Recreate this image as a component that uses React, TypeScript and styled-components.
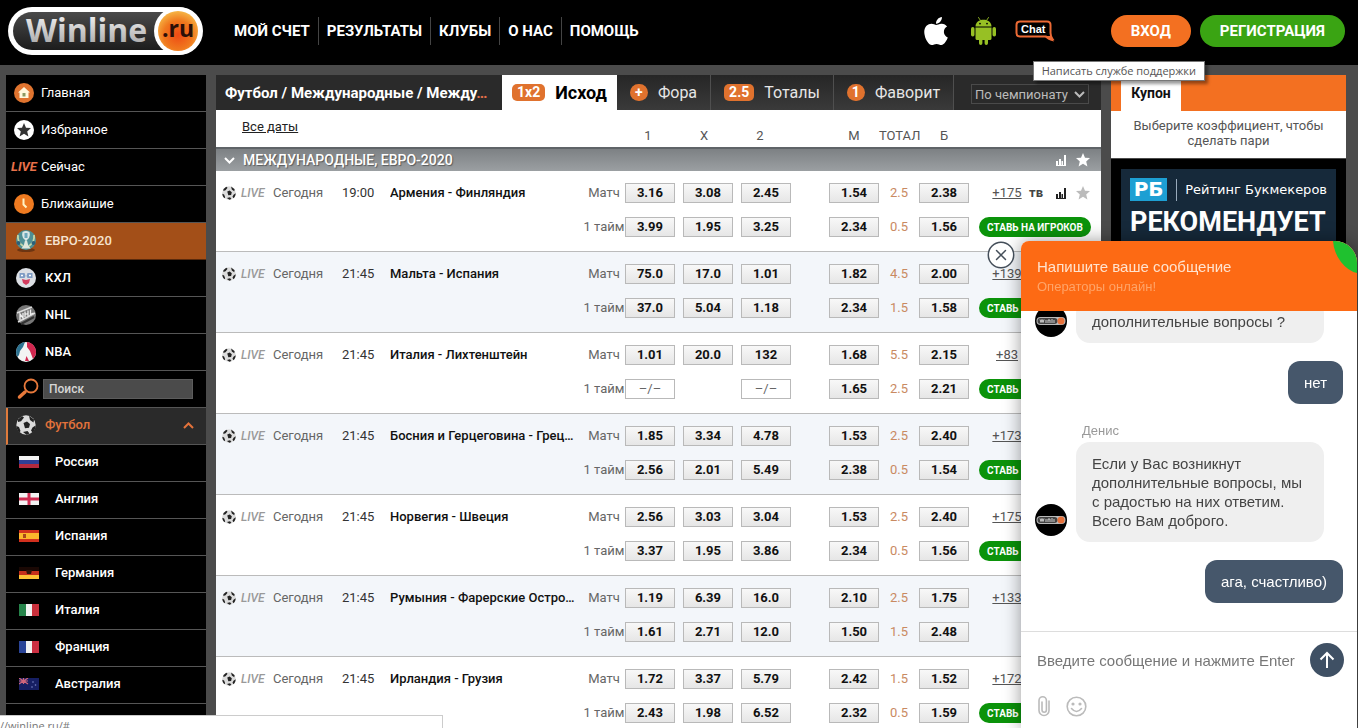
import React from "react";
import styled, { createGlobalStyle, css } from "styled-components";
import { FaApple } from "react-icons/fa";

const GlobalStyle = createGlobalStyle`
  * { box-sizing: border-box; }
  html, body { margin: 0; height: 100%; }
  body {
    background: #4b4b4b;
    color: #222;
    font-family: Roboto, "Noto Sans", sans-serif;
    font-size: 13px;
    overflow: hidden;
  }
  button, input, select { font-family: inherit; margin: 0; }
  button { cursor: pointer; }
`;

/* ---------- Page frame ---------- */

const Page = styled.div`
  height: 100vh;
  overflow: hidden;
  display: flex;
  flex-direction: column;
`;

const Columns = styled.div`
  flex: 1;
  min-height: 0;
  display: flex;
  gap: 10px;
  padding: 10px 12px 0 6px;
`;

/* ---------- Header ---------- */

const Header = styled.header`
  flex: none;
  height: 65px;
  padding: 0 13px 4px 8px;
  background: #000;
  display: flex;
  align-items: center;
`;

const LogoLink = styled.a`
  display: block;
  height: 48px;
  margin-right: 22px;
`;

const Nav = styled.nav`
  display: flex;
  flex: 1;
`;

const NavLink = styled.a`
  padding: 0 8px;
  line-height: 28px;
  font-size: 15px;
  font-weight: 700;
  color: #fff;
  text-decoration: none;
  white-space: nowrap;
  & + & { border-left: 1px solid #444; }
`;

const HeaderIcons = styled.div`
  display: flex;
  align-items: center;
  gap: 18px;
  margin-right: 56px;
`;

const IconLink = styled.a`
  position: relative;
  display: flex;
  color: #fff;
`;

const Tooltip = styled.span`
  position: absolute;
  z-index: 5;
  top: 41px;
  left: 18px;
  padding: 0 8px;
  border: 1px solid #777;
  background: #fff;
  box-shadow: 3px 3px 3px rgba(0, 0, 0, 0.4);
  color: #555;
  font-family: "Open Sans", sans-serif;
  font-size: 11px;
  line-height: 18px;
  white-space: nowrap;
`;

const PillButton = styled.button<{ $tone: string }>`
  height: 32px;
  padding: 0 20px;
  border: 0;
  border-radius: 16px;
  background: ${(p) => p.$tone};
  color: #fff;
  font-size: 15px;
  font-weight: 700;
  & + & { margin-left: 9px; }
`;

/* ---------- Sidebar ---------- */

const Sidebar = styled.nav`
  flex: none;
  width: 200px;
  background: #000;
  overflow: hidden;
`;

const SideItem = styled.a<{ $kind: "top" | "league" | "euro" | "sport" | "country" }>`
  display: flex;
  align-items: center;
  height: 37px;
  border-bottom: 1px solid #555;
  padding: 0 12px 0 4px;
  gap: 3px;
  color: #fff;
  font-size: 13px;
  font-weight: 500;
  line-height: 20px;
  text-decoration: none;
  ${(p) => p.$kind === "top" && css`font-weight: 400;`}
  ${(p) => (p.$kind === "league" || p.$kind === "euro") && css`padding-left: 6px; gap: 5px;`}
  ${(p) => p.$kind === "euro" && css`background: #a34f18; border-color: #5a2a0c; color: #f5e3d0;`}
  ${(p) => p.$kind === "sport" && css`
    padding: 0 12px 2px 4px; gap: 5px; background: #2a2a2a; color: #e2723b; border-left: 2px solid #e07b3c;
  `}
  ${(p) => p.$kind === "country" && css`padding: 0 12px 2px 9px; gap: 12px;`}
`;

const SideIcon = styled.span`
  width: 28px;
  display: flex;
  justify-content: center;
`;

const SideLabel = styled.span`
  flex: 1;
`;

const LiveMark = styled.span<{ $muted?: boolean }>`
  font-size: ${(p) => (p.$muted ? 12 : 13)}px;
  font-weight: ${(p) => (p.$muted ? 500 : 700)};
  font-style: italic;
  color: ${(p) => (p.$muted ? "#999" : "#e8714a")};
`;

const SearchRow = styled.label`
  display: flex;
  align-items: center;
  height: 37px;
  border-bottom: 1px solid #555;
  padding: 0 13px 0 11px;
  gap: 4px;
`;

const SearchInput = styled.input`
  flex: 1;
  min-width: 0;
  height: 20px;
  border: 1px solid #5c5c5c;
  padding: 0 5px;
  background: #4b4b4b;
  color: #ddd;
  font-size: 12px;
  font-weight: 500;
  &::placeholder { color: #d5d5d5; opacity: 1; }
`;

/* ---------- Main board ---------- */

const Board = styled.main`
  flex: 1;
  min-width: 0;
  background: #fff;
  overflow: hidden;
`;

const BoardBar = styled.div`
  display: flex;
  height: 35px;
  background: #2a2a2a;
`;

const Crumbs = styled.h1`
  flex: 1;
  min-width: 0;
  margin: 0;
  padding: 0 0 0 9px;
  font-size: 15px;
  line-height: 37px;
  font-weight: 700;
  color: #e8714a;
  overflow: hidden;
  white-space: nowrap;
  text-overflow: ellipsis;
  span { color: #fff; }
`;

const Tab = styled.button<{ $active?: boolean; $width: number }>`
  flex: none;
  width: ${(p) => p.$width}px;
  display: flex;
  align-items: center;
  justify-content: center;
  gap: 10px;
  padding: 0;
  border: 0;
  border-right: 1px solid #4f4f4f;
  background: linear-gradient(#262626, #3a3a3a);
  color: #e6e6e6;
  font-size: 16px;
  ${(p) => p.$active && css`
    border: 0;
    background: #fff;
    color: #000;
    font-size: 18px;
    font-weight: 700;
  `}
`;

const Badge = styled.span<{ $round?: boolean }>`
  min-width: 18px;
  height: 17px;
  padding: 0 5px;
  border-radius: ${(p) => (p.$round ? 9 : 5)}px;
  background: #e0722e;
  color: #fff;
  font-size: 14px;
  line-height: 17px;
  font-weight: 700;
`;

const SortBox = styled.div`
  position: relative;
  flex: none;
  width: 118px;
  margin: 9px 12px 5px 17px;
  color: #bbb;
  svg { position: absolute; right: 4px; top: 7px; pointer-events: none; }
`;

const SortSelect = styled.select`
  appearance: none;
  width: 100%;
  height: 20px;
  padding: 0 0 0 3px;
  border: 1px solid #4a4a4a;
  background: transparent;
  color: #bbb;
  font-size: 13px;
`;

const Table = styled.table`
  width: 100%;
  table-layout: fixed;
  border-collapse: separate;
  border-spacing: 0;
  td, th { padding: 0; font-weight: 400; text-align: left; vertical-align: top; line-height: 20px; }
`;

const HeadRow = styled.tr`
  height: 37px;
  color: #555;
  font-size: 13px;
`;

const DatesHead = styled.th`
  && { padding: 7px 0 0 26px; }
  a { color: #222; }
`;

const ColHead = styled.th`
  && { padding: 16px 0 0; white-space: nowrap; }
`;

const ColLabels = styled.div<{ $w: number }>`
  display: flex;
  gap: 10px;
  span { width: ${(p) => p.$w}px; text-align: center; }
`;

const LeagueRow = styled.tr`
  height: 24px;
`;

const LeagueHead = styled.th`
  && {
    height: 24px;
    border-top: 2px solid #5f6468;
    background: linear-gradient(#7d8184, #9b9fa2);
  }
`;

const LeagueBar = styled.div`
  display: flex;
  align-items: center;
  height: 22px;
  padding: 0 11px 0 8px;
  color: #fff;
  font-size: 14px;
  font-weight: 500;
  text-shadow: 1px 1px 1px rgba(0, 0, 0, 0.4);
`;

const LeagueName = styled.span`
  flex: 1;
  padding-left: 8px;
`;

const IconButton = styled.button`
  display: flex;
  padding: 0;
  border: 0;
  background: none;
  color: inherit;
`;

const IconPair = styled.span`
  display: flex;
  align-items: center;
  gap: 10px;
`;

const MatchBody = styled.tbody<{ $tinted: boolean }>`
  background: ${(p) => (p.$tinted ? "#f3f6fa" : "#fff")};
`;

const FirstLine = styled.tr`
  height: 46px;
  && td { padding-top: 12px; }
`;

const SecondLine = styled.tr`
  height: 35px;
  && td { border-bottom: 1px solid #bbb; }
`;

const LiveCell = styled.div`
  display: flex;
  align-items: center;
  gap: 5px;
  padding-left: 6px;
`;

const MutedCell = styled.td<{ $center?: boolean }>`
  && { color: #666; white-space: nowrap; text-align: ${(p) => (p.$center ? "center" : "left")}; }
`;

const TimeCell = styled.td`
  color: #333;
`;

const NameCell = styled.td`
  && {
    padding-right: 8px;
    overflow: hidden;
    white-space: nowrap;
    text-overflow: ellipsis;
    font-weight: 500;
    color: #111;
  }
`;

const TotalCell = styled.td`
  && { color: #c98a62; text-align: center; }
`;

const OddButton = styled.button<{ $empty?: boolean }>`
  display: block;
  width: 50px;
  height: 20px;
  padding: 0;
  border: 1px solid #b9b9b9;
  background: ${(p) => (p.$empty ? "#fff" : "linear-gradient(#f8f8f8, #e6e6e6)")};
  color: ${(p) => (p.$empty ? "#666" : "#111")};
  font-size: 13px;
  line-height: 18px;
  font-weight: ${(p) => (p.$empty ? 400 : 700)};
`;

const Extras = styled.div`
  display: flex;
  align-items: center;
  height: 20px;
  padding: 0 11px 0 13px;
`;

const MoreLink = styled.a`
  width: 30px;
  margin-right: 7px;
  text-align: center;
  color: #555;
`;

const TvMark = styled.span`
  flex: 1;
  font-size: 13px;
  font-weight: 700;
  color: #444;
`;

const Faded = styled.span`
  display: flex;
  color: #bbb;
`;

const PlayerBet = styled.button`
  display: block;
  width: 112px;
  height: 20px;
  padding: 0;
  border: 0;
  border-radius: 10px;
  background: #0b930a;
  color: #fff;
  font-size: 10px;
  font-weight: 700;
  white-space: nowrap;
`;

/* ---------- Right column ---------- */

const Aside = styled.aside`
  flex: none;
  width: 235px;
`;

const CouponBar = styled.div`
  height: 36px;
  padding: 5px 10px 0;
  background: #f37021;
`;

const CouponTab = styled.h2`
  width: 60px;
  height: 31px;
  margin: 0;
  background: #fff;
  color: #111;
  font-size: 14px;
  line-height: 27px;
  font-weight: 700;
  text-align: center;
`;

const CouponText = styled.p`
  margin: 0 0 1px;
  padding: 7px 10px 10px;
  background: #fff;
  color: #555;
  font-size: 13px;
  line-height: 15px;
  text-align: center;
`;

const Banner = styled.section`
  padding: 10px;
  background: #000;
`;

const BannerInner = styled.div`
  height: 240px;
  padding: 9px 9px 0;
  background: #16293a;
  color: #fff;
`;

const BannerTop = styled.div`
  display: flex;
  align-items: center;
  height: 23px;
  font-family: "DejaVu Sans", sans-serif;
  font-size: 12px;
  white-space: nowrap;
`;

const BannerMark = styled.span`
  width: 38px;
  height: 23px;
  margin-right: 9px;
  background: #1d9fd3;
  font-size: 20px;
  line-height: 23px;
  font-weight: 700;
  text-align: center;
`;

const BannerSource = styled.span`
  border-left: 1px solid #9ab;
  padding-left: 8px;
  font-size: 13px;
  line-height: 22px;
`;

const BannerTitle = styled.strong`
  display: block;
  font-size: 27px;
  line-height: 42px;
  font-weight: 700;
`;

/* ---------- Chat ---------- */

const Chat = styled.section`
  position: fixed;
  z-index: 10;
  right: 1px;
  bottom: 0;
  width: 336px;
  height: 487px;
  display: flex;
  flex-direction: column;
  border-radius: 8px 22px 0 0;
  background: #fff;
  box-shadow: 0 0 18px rgba(0, 0, 0, 0.4);
  font-family: "Liberation Sans", Arial, sans-serif;
  font-size: 15px;
  line-height: 19px;
`;

const ChatHeader = styled.header`
  position: relative;
  flex: none;
  height: 70px;
  padding: 16px 16px 0;
  border-radius: 8px 22px 0 0;
  background: #fd6a14;
  color: #ffe3cf;
  overflow: hidden;
`;

const ChatTitle = styled.h2`
  margin: 0;
  font-size: 15px;
  line-height: 20px;
  font-weight: 400;
`;

const ChatStatus = styled.p`
  margin: 0;
  font-size: 13px;
  line-height: 19px;
  color: #ffa468;
`;

const OnlineCorner = styled.svg`
  position: absolute;
  top: 0;
  right: 0;
`;

const CloseButton = styled.button`
  position: absolute;
  top: 0;
  left: -34px;
  width: 28px;
  height: 28px;
  padding: 0;
  border: 0;
  border-radius: 50%;
  background: none;
`;

const Messages = styled.div`
  flex: 1;
  min-height: 0;
  overflow: hidden;
  display: flex;
  flex-direction: column;
  justify-content: flex-end;
  gap: 18px;
  padding: 0 14px 28px;
`;

const AgentMessage = styled.div`
  flex: none;
  display: flex;
  align-items: flex-end;
  gap: 9px;
`;

const AgentName = styled.div`
  padding: 0 6px 2px;
  font-size: 13px;
  line-height: 18px;
  color: #999;
`;

const Avatar = styled.span`
  flex: none;
  height: 32px;
  margin-bottom: 6px;
`;

const AgentBubble = styled.div`
  width: 248px;
  padding: 12px 16px;
  border-radius: 14px;
  background: #efefef;
  color: #444;
`;

const UserBubble = styled.div`
  flex: none;
  align-self: flex-end;
  padding: 12px 16px;
  border-radius: 12px;
  background: #46576b;
  color: #fff;
`;

const Composer = styled.form`
  flex: none;
  height: 97px;
  padding: 11px 13px 0 16px;
  border-top: 1px solid #ddd;
`;

const ComposerRow = styled.div`
  display: flex;
  align-items: center;
`;

const MessageInput = styled.input`
  flex: 1;
  min-width: 0;
  height: 34px;
  padding: 0;
  border: 0;
  font-size: 15px;
  &::placeholder { color: #777; opacity: 1; }
`;

const SendButton = styled.button`
  width: 34px;
  height: 34px;
  display: flex;
  align-items: center;
  justify-content: center;
  padding: 0;
  border: 0;
  border-radius: 50%;
  background: #3f5064;
`;

const ComposerTools = styled.div`
  display: flex;
  align-items: center;
  gap: 15px;
  padding-top: 18px;
  color: #bbb;
`;

const StatusBar = styled.div`
  position: fixed;
  z-index: 12;
  left: 0;
  bottom: 0;
  width: 443px;
  height: 13px;
  overflow: hidden;
  border: 1px solid #ccc;
  border-width: 1px 1px 0 0;
  background: #fff;
  color: #777;
  font-family: "Open Sans", sans-serif;
  font-size: 11px;
  line-height: 20px;
`;

/* ---------- Drawings ---------- */

const Logo = () => (
  <svg width="196" height="48" viewBox="0 0 196 48" role="img" aria-label="Winline.ru">
    <defs>
      <linearGradient id="lgBody" x1="0" y1="0" x2="0" y2="1">
        <stop offset="0" stopColor="#4a4a4a" />
        <stop offset="1" stopColor="#1c1c1c" />
      </linearGradient>
      <linearGradient id="lgText" x1="0" y1="0" x2="0" y2="1">
        <stop offset="0" stopColor="#fff" />
        <stop offset="1" stopColor="#9c9c9c" />
      </linearGradient>
      <radialGradient id="lgBall" cx="0.5" cy="0.6" r="0.6">
        <stop offset="0" stopColor="#ee4a14" />
        <stop offset="0.6" stopColor="#f0781e" />
        <stop offset="1" stopColor="#f6b545" />
      </radialGradient>
    </defs>
    <rect x="0" y="0" width="195" height="48" rx="24" fill="#fff" />
    <rect x="5" y="5" width="170" height="38" rx="19" fill="url(#lgBody)" />
    <circle cx="170" cy="24" r="24" fill="#fff" />
    <circle cx="170" cy="24" r="20" fill="url(#lgBall)" />
    <text x="18" y="35" fontFamily="Open Sans, sans-serif" fontSize="32" fontWeight="700" fill="url(#lgText)">Winline</text>
    <text x="154" y="30" fontFamily="Open Sans, sans-serif" fontSize="23" fontWeight="700" fill="#2a0f08">.ru</text>
  </svg>
);

const AndroidIcon = () => (
  <svg width="27" height="28" viewBox="0 0 27 28" fill="#97c024">
    <path d="M5.5 9.6C5.5 5.5 9 2.8 13.5 2.8s8 2.7 8 6.8z" />
    <path d="M8.5.5l2 3M18.5.5l-2 3" stroke="#97c024" strokeWidth="0.9" strokeLinecap="round" />
    <circle cx="10" cy="6.6" r="0.9" fill="#000" />
    <circle cx="17" cy="6.6" r="0.9" fill="#000" />
    <path d="M5.5 10.4h16v11a1.7 1.7 0 0 1-1.7 1.7H18v3.2a1.7 1.7 0 0 1-3.4 0v-3.2h-2.2v3.2a1.7 1.7 0 0 1-3.4 0v-3.2H7.2a1.7 1.7 0 0 1-1.7-1.7z" />
    <rect x="1" y="10" width="3.5" height="9.5" rx="1.7" />
    <rect x="22.5" y="10" width="3.5" height="9.5" rx="1.7" />
  </svg>
);

const ChatIcon = () => (
  <svg width="40" height="22" viewBox="0 0 40 22">
    <path
      d="M5 1.500h27q3.500 0 3.500 3.500v8q0 3 2 6-4-.5-6.500-2.500H5Q1.500 16.500 1.500 13V5Q1.500 1.500 5 1.500z"
      fill="none" stroke="#ec6a35" strokeWidth="2"
    />
    <path d="M29 16h7l3 5.500q-6-1-10-5.500z" fill="#ec6a35" />
    <text x="6" y="13" fontFamily="Liberation Sans, sans-serif" fontSize="11" fontWeight="700" fill="#fff">Chat</text>
  </svg>
);

const starPath = "M7 0l2 4.7 5 .4-3.8 3.3 1.2 5L7 10.7 2.6 13.4l1.2-5L0 5.1l5-.4z";

const Star = () => (
  <svg width="14" height="14" viewBox="0 0 14 14" fill="currentColor"><path d={starPath} /></svg>
);

const Bars = () => (
  <svg width="10" height="11" viewBox="0 0 10 11" fill="currentColor">
    <path d="M0 6h2v4H0zM3 4h2v6H3zM5.500 6h1.500v4H5.500zM8 0h2v10H8zM0 10h10v1H0z" />
  </svg>
);

const Chevron = ({ up = false }: { up?: boolean }) => (
  <svg width="11" height="7" viewBox="0 0 11 7" fill="none" stroke="currentColor" strokeWidth="2">
    <path d={up ? "M1 6l4.5-4.5L10 6" : "M1 1l4.5 4.5L10 1"} />
  </svg>
);

const Ball = ({ size }: { size: number }) => (
  <svg width={size} height={size} viewBox="0 0 20 20">
    <circle cx="10" cy="10" r="9.7" fill="#dcdcdc" />
    <path
      d="M7.5 8l3.5-1.500 3 2.500-1 3.800-4 .4zM2 4.500L6 1l2 1.500-3 3.700-3 .8zM13 .8l5 3.700-.5 3L14 5zM.5 11l2.500 1 1.500 4-1 1.500C1.500 16 .5 13 .5 11zM7 17l4.500-1 2 2.500-3 1.300zM16.500 12.500l3-2c0 3-1 5.500-3 7l-1.500-2z"
      fill="#222"
    />
  </svg>
);

const HomeIcon = () => (
  <svg width="20" height="20" viewBox="0 0 20 20">
    <circle cx="10" cy="10" r="10" fill="#e0742f" />
    <path d="M10 4l6 5.5h-1.500V15h-9V9.500H4z" fill="#fff8dc" />
    <rect x="8.500" y="10" width="3" height="3.500" fill="#8b9a62" />
  </svg>
);

const FavIcon = () => (
  <svg width="20" height="20" viewBox="0 0 20 20">
    <circle cx="10" cy="10" r="10" fill="#fff" />
    <path d={starPath} transform="translate(3 3)" fill="#333" />
  </svg>
);

const ClockIcon = () => (
  <svg width="20" height="20" viewBox="0 0 20 20">
    <circle cx="10" cy="10" r="10" fill="#ee7a20" />
    <path d="M9.500 4.500v6l3 3" fill="none" stroke="#fff3c4" strokeWidth="2" />
  </svg>
);

const EuroIcon = () => (
  <svg width="22" height="22" viewBox="0 0 22 22">
    <ellipse cx="11" cy="20" rx="9" ry="2" fill="#6d3512" />
    <circle cx="11" cy="10" r="10" fill="#4e8f94" />
    <path d="M7.500 2q3.500-2 7 0 1 3-.5 6l-3 3-3-3q-1.500-3-.5-6z" fill="#d9e6e6" />
    <path d="M10 10.500h2l1 4 2.500 4h-9l2.500-4z" fill="#dfe8dc" />
    <path d="M3 5q-1 7 5 11M19 5q1 7-5 11" fill="none" stroke="#c6d8a8" strokeWidth="1.800" />
    <circle cx="3.500" cy="13" r="2" fill="#2b6078" /><circle cx="18.500" cy="13" r="2" fill="#2b6078" />
    <path d="M9.500 3h3v5h-3z" fill="#6aa6bb" />
  </svg>
);

const KhlIcon = () => (
  <svg width="20" height="20" viewBox="0 0 20 20">
    <circle cx="10" cy="10" r="10" fill="#dcdfe4" />
    <path d="M3.500 5h5l1 3-1 2h-5zM11.500 5h5v5h-5l-1-2z" fill="#7f9cc4" />
    <path d="M6 11l4 1 4-1-1 4-3 2-3-2z" fill="#d23b5e" />
    <path d="M5 7.500h2M13 7.500h2" stroke="#fff" strokeWidth="1.500" />
  </svg>
);

const NhlIcon = () => (
  <svg width="20" height="20" viewBox="0 0 20 20">
    <circle cx="10" cy="10" r="10" fill="#777" />
    <path d="M1 8L16 2M2 17L19 8" stroke="#ddd" strokeWidth="1.500" />
    <path d="M4 15V9l3 4V8M9 12V6.500M12 11V5.500M9 9.500l3-1M14.500 4.500v5l3-1.500" fill="none" stroke="#eee" strokeWidth="1.300" />
    <path d="M5 19l13-7" stroke="#333" strokeWidth="2" />
  </svg>
);

const NbaIcon = () => (
  <svg width="20" height="20" viewBox="0 0 20 20">
    <circle cx="10" cy="10" r="10" fill="#f3f3f3" />
    <path d="M0 10A10 10 0 0 1 9 0L7 5 4 9l-1 4-1.500 2q-1.500-2-1.500-5z" fill="#2c7291" />
    <path d="M11 0a10 10 0 0 1 6 17l-3-8-3-4z" fill="#d2274f" />
    <path d="M9 19l1.500-5 2.500 5z" fill="#d2274f" />
  </svg>
);

const SearchIcon = () => (
  <svg width="22" height="22" viewBox="0 0 22 22" fill="none" stroke="#e8793b" strokeLinecap="round">
    <circle cx="14" cy="8" r="6.500" strokeWidth="1.800" />
    <path d="M8 14l-5.500 5" strokeWidth="3.500" />
  </svg>
);

const flags: Record<string, React.ReactNode> = {
  "Россия": <><rect width="20" height="12" fill="#f2f2f2" /><rect y="4" width="20" height="4" fill="#2f3f95" /><rect y="8" width="20" height="4" fill="#b32a3d" /></>,
  "Англия": <><rect width="20" height="12" fill="#f2f2f2" /><path d="M8.500 0h3v12h-3zM0 4.500h20v3H0z" fill="#cf2b50" /></>,
  "Испания": <><rect width="20" height="12" fill="#d2301e" /><rect y="3" width="20" height="6" fill="#fbb52c" /><rect x="4" y="4" width="3" height="4" fill="#a8461c" /></>,
  "Германия": <><rect width="20" height="12" fill="#1a0804" /><rect y="4" width="20" height="4" fill="#c5301b" /><rect y="8" width="20" height="4" fill="#fcc335" /><path d="M7 3h6l-1 4H8z" fill="#30150a" /></>,
  "Италия": <><rect width="20" height="12" fill="#f2f2f2" /><rect width="7" height="12" fill="#26834a" /><rect x="13" width="7" height="12" fill="#c9303c" /></>,
  "Франция": <><rect width="20" height="12" fill="#f2f2f2" /><rect width="7" height="12" fill="#2a4497" /><rect x="13" width="7" height="12" fill="#cc2f42" /></>,
  "Австралия": <><rect width="20" height="12" fill="#161f63" /><path d="M0 0l9 6M9 0L0 6M4.500 0v6M0 3h9" stroke="#d0667c" strokeWidth="1.200" /><circle cx="14" cy="4" r="0.800" fill="#7d88c8" /><circle cx="16.500" cy="7" r="0.800" fill="#7d88c8" /><circle cx="13" cy="9" r="0.800" fill="#7d88c8" /></>,
};

const AgentAvatar = () => (
  <Avatar>
    <svg width="32" height="32" viewBox="0 0 32 32">
      <circle cx="16" cy="16" r="16" fill="#000" />
      <rect x="1.500" y="12" width="29" height="8" rx="4" fill="#bbb" />
      <rect x="2.500" y="13" width="20" height="6" rx="3" fill="#444" />
      <path d="M5 14.500l1 3 1-3 1 3 1-3M11 15v3M13 18v-3h2v3M17 14v4M19 15v3" stroke="#ddd" strokeWidth="0.900" fill="none" />
      <circle cx="26" cy="16" r="3.500" fill="#e8713a" />
    </svg>
  </Avatar>
);

/* ---------- Data ---------- */

interface Match {
  time: string;
  name: string;
  more: string;
  full: string[];
  half: string[];
  bet: boolean;
}

/* Order of values: 1, X, 2, under, total, over. */
const matches: Match[] = [
  { time: "19:00", name: "Армения - Финляндия", more: "+175", full: ["3.16", "3.08", "2.45", "1.54", "2.5", "2.38"], half: ["3.99", "1.95", "3.25", "2.34", "0.5", "1.56"], bet: true },
  { time: "21:45", name: "Мальта - Испания", more: "+139", full: ["75.0", "17.0", "1.01", "1.82", "4.5", "2.00"], half: ["37.0", "5.04", "1.18", "2.34", "1.5", "1.58"], bet: true },
  { time: "21:45", name: "Италия - Лихтенштейн", more: "+83", full: ["1.01", "20.0", "132", "1.68", "5.5", "2.15"], half: ["–/–", "", "–/–", "1.65", "2.5", "2.21"], bet: true },
  { time: "21:45", name: "Босния и Герцеговина - Греция", more: "+173", full: ["1.85", "3.34", "4.78", "1.53", "2.5", "2.40"], half: ["2.56", "2.01", "5.49", "2.38", "0.5", "1.54"], bet: true },
  { time: "21:45", name: "Норвегия - Швеция", more: "+175", full: ["2.56", "3.03", "3.04", "1.53", "2.5", "2.40"], half: ["3.37", "1.95", "3.86", "2.34", "0.5", "1.56"], bet: true },
  { time: "21:45", name: "Румыния - Фарерские Острова", more: "+133", full: ["1.19", "6.39", "16.0", "2.10", "2.5", "1.75"], half: ["1.61", "2.71", "12.0", "1.50", "1.5", "2.48"], bet: false },
  { time: "21:45", name: "Ирландия - Грузия", more: "+172", full: ["1.72", "3.37", "5.79", "2.42", "1.5", "1.52"], half: ["2.43", "1.98", "6.52", "2.32", "0.5", "1.59"], bet: true },
];

const columnWidths = [57, 69, 48, 0, 42, 58, 58, 88, 50, 40, 60, 122];

const Col = styled.col<{ $w: number }>`
  width: ${(p) => (p.$w ? `${p.$w}px` : "auto")};
`;

const Odds = ({ values }: { values: string[] }) => (
  <>
    {values.map((v, i) =>
      i === 4 ? (
        <TotalCell key={i}>{v}</TotalCell>
      ) : (
        <td key={i}>{v && <OddButton $empty={v === "–/–"}>{v}</OddButton>}</td>
      )
    )}
  </>
);

const MatchRows = ({ match, index }: { match: Match; index: number }) => (
  <MatchBody $tinted={index % 2 === 1}>
    <FirstLine>
      <td><LiveCell><Ball size={14} /><LiveMark $muted>LIVE</LiveMark></LiveCell></td>
      <MutedCell>Сегодня</MutedCell>
      <TimeCell>{match.time}</TimeCell>
      <NameCell>{match.name}</NameCell>
      <MutedCell $center>Матч</MutedCell>
      <Odds values={match.full} />
      <td>
        <Extras>
          <MoreLink href="#">{match.more}</MoreLink>
          <TvMark>тв</TvMark>
          <IconPair>
            <IconButton aria-label="Статистика"><Bars /></IconButton>
            <IconButton aria-label="В избранное"><Faded><Star /></Faded></IconButton>
          </IconPair>
        </Extras>
      </td>
    </FirstLine>
    <SecondLine>
      <td colSpan={4} />
      <MutedCell $center>1 тайм</MutedCell>
      <Odds values={match.half} />
      <td>{match.bet && <PlayerBet>СТАВЬ НА ИГРОКОВ</PlayerBet>}</td>
    </SecondLine>
  </MatchBody>
);

/* ---------- App ---------- */

export default function App() {
  return (
    <Page>
      <GlobalStyle />
      <Header>
        <LogoLink href="#"><Logo /></LogoLink>
        <Nav>
          {["МОЙ СЧЕТ", "РЕЗУЛЬТАТЫ", "КЛУБЫ", "О НАС", "ПОМОЩЬ"].map((t) => (
            <NavLink key={t} href="#">{t}</NavLink>
          ))}
        </Nav>
        <HeaderIcons>
          <IconLink href="#" aria-label="iOS"><FaApple size={32} /></IconLink>
          <IconLink href="#" aria-label="Android"><AndroidIcon /></IconLink>
          <IconLink href="#">
            <ChatIcon />
            <Tooltip role="tooltip">Написать службе поддержки</Tooltip>
          </IconLink>
        </HeaderIcons>
        <PillButton $tone="#f37021">ВХОД</PillButton>
        <PillButton $tone="#3aa413">РЕГИСТРАЦИЯ</PillButton>
      </Header>

      <Columns>
        <Sidebar>
          <SideItem $kind="top" href="#"><SideIcon><HomeIcon /></SideIcon><SideLabel>Главная</SideLabel></SideItem>
          <SideItem $kind="top" href="#"><SideIcon><FavIcon /></SideIcon><SideLabel>Избранное</SideLabel></SideItem>
          <SideItem $kind="top" href="#"><SideIcon><LiveMark>LIVE</LiveMark></SideIcon><SideLabel>Сейчас</SideLabel></SideItem>
          <SideItem $kind="top" href="#"><SideIcon><ClockIcon /></SideIcon><SideLabel>Ближайшие</SideLabel></SideItem>
          <SideItem $kind="euro" href="#"><SideIcon><EuroIcon /></SideIcon><SideLabel>ЕВРО-2020</SideLabel></SideItem>
          <SideItem $kind="league" href="#"><SideIcon><KhlIcon /></SideIcon><SideLabel>КХЛ</SideLabel></SideItem>
          <SideItem $kind="league" href="#"><SideIcon><NhlIcon /></SideIcon><SideLabel>NHL</SideLabel></SideItem>
          <SideItem $kind="league" href="#"><SideIcon><NbaIcon /></SideIcon><SideLabel>NBA</SideLabel></SideItem>
          <SearchRow><SearchIcon /><SearchInput placeholder="Поиск" aria-label="Поиск" /></SearchRow>
          <SideItem $kind="sport" href="#">
            <SideIcon><Ball size={20} /></SideIcon><SideLabel>Футбол</SideLabel><Chevron up />
          </SideItem>
          {Object.keys(flags).map((name) => (
            <SideItem key={name} $kind="country" href="#">
              <SideIcon><svg width="20" height="12" viewBox="0 0 20 12">{flags[name]}</svg></SideIcon>
              <SideLabel>{name}</SideLabel>
            </SideItem>
          ))}
        </Sidebar>

        <Board>
          <BoardBar>
            <Crumbs><span>Футбол / Международные / Между</span>…</Crumbs>
            <Tab $active $width={115}><Badge>1x2</Badge>Исход</Tab>
            <Tab $width={94}><Badge $round>+</Badge>Фора</Tab>
            <Tab $width={123}><Badge>2.5</Badge>Тоталы</Tab>
            <Tab $width={120}><Badge $round>1</Badge>Фаворит</Tab>
            <SortBox>
              <SortSelect aria-label="Сортировка"><option>По чемпионату</option></SortSelect>
              <Chevron />
            </SortBox>
          </BoardBar>
          <Table>
            <colgroup>{columnWidths.map((w, i) => <Col key={i} $w={w} />)}</colgroup>
            <thead>
              <HeadRow>
                <DatesHead colSpan={5}><a href="#">Все даты</a></DatesHead>
                <ColHead colSpan={3}>
                  <ColLabels $w={46}><span>1</span><span>X</span><span>2</span></ColLabels>
                </ColHead>
                <ColHead><ColLabels $w={50}><span>М</span></ColLabels></ColHead>
                <ColHead><ColLabels $w={42}><span>ТОТАЛ</span></ColLabels></ColHead>
                <ColHead><ColLabels $w={50}><span>Б</span></ColLabels></ColHead>
                <th />
              </HeadRow>
            </thead>
            <tbody>
              <LeagueRow>
                <LeagueHead colSpan={12}>
                  <LeagueBar>
                    <Chevron />
                    <LeagueName>МЕЖДУНАРОДНЫЕ, ЕВРО-2020</LeagueName>
                    <IconPair>
                      <IconButton aria-label="Статистика"><Bars /></IconButton>
                      <IconButton aria-label="В избранное"><Star /></IconButton>
                    </IconPair>
                  </LeagueBar>
                </LeagueHead>
              </LeagueRow>
            </tbody>
            {matches.map((m, i) => <MatchRows key={m.name} match={m} index={i} />)}
          </Table>
        </Board>

        <Aside>
          <CouponBar><CouponTab>Купон</CouponTab></CouponBar>
          <CouponText>Выберите коэффициент, чтобы сделать пари</CouponText>
          <Banner>
            <BannerInner>
              <BannerTop>
                <BannerMark>РБ</BannerMark>
                <BannerSource>Рейтинг Букмекеров</BannerSource>
              </BannerTop>
              <BannerTitle>РЕКОМЕНДУЕТ</BannerTitle>
            </BannerInner>
          </Banner>
        </Aside>
      </Columns>

      <Chat aria-label="Чат">
        <ChatHeader>
          <ChatTitle>Напишите ваше сообщение</ChatTitle>
          <ChatStatus>Операторы онлайн!</ChatStatus>
          <OnlineCorner width="24" height="32" viewBox="0 0 24 32">
            <path d="M0 0q1 12 8 21 7 9 16 11V0z" fill="#1fc12f" />
          </OnlineCorner>
        </ChatHeader>
        <CloseButton aria-label="Закрыть">
          <svg width="28" height="28" viewBox="0 0 28 28" stroke="#444e59" strokeWidth="1.500" strokeLinecap="round">
            <circle cx="14" cy="14" r="12.700" fill="#fff" />
            <path d="M9.500 9.500l9 9M18.500 9.500l-9 9" />
          </svg>
        </CloseButton>
        <Messages>
          <AgentMessage><AgentAvatar /><AgentBubble>дополнительные вопросы ?</AgentBubble></AgentMessage>
          <UserBubble>нет</UserBubble>
          <AgentMessage>
            <AgentAvatar />
            <div>
              <AgentName>Денис</AgentName>
              <AgentBubble>Если у Вас возникнут дополнительные вопросы, мы с радостью на них ответим. Всего Вам доброго.</AgentBubble>
            </div>
          </AgentMessage>
          <UserBubble>ага, счастливо)</UserBubble>
        </Messages>
        <Composer onSubmit={(e) => e.preventDefault()}>
          <ComposerRow>
            <MessageInput placeholder="Введите сообщение и нажмите Enter" aria-label="Сообщение" />
            <SendButton aria-label="Отправить">
              <svg width="16" height="18" viewBox="0 0 16 18" fill="none" stroke="#fff" strokeWidth="2">
                <path d="M8 17V2M1.500 8.500L8 2l6.500 6.500" />
              </svg>
            </SendButton>
          </ComposerRow>
          <ComposerTools>
            <IconButton type="button" aria-label="Прикрепить файл">
              <svg width="14" height="22" viewBox="0 0 14 22" fill="none" stroke="currentColor" strokeWidth="1.600" strokeLinecap="round">
                <path d="M12 6v9.500a5 5 0 0 1-10 0V5.500a3.700 3.700 0 0 1 7.400 0v9.500a2.200 2.200 0 0 1-4.400 0V7" />
              </svg>
            </IconButton>
            <IconButton type="button" aria-label="Смайлики">
              <svg width="21" height="21" viewBox="0 0 21 21" fill="none" stroke="currentColor" strokeWidth="1.600" strokeLinecap="round">
                <circle cx="10.500" cy="10.500" r="9.300" />
                <path d="M5.500 12.500q5 6 10 0" />
                <circle cx="7" cy="8" r="0.800" fill="currentColor" />
                <circle cx="14" cy="8" r="0.800" fill="currentColor" />
              </svg>
            </IconButton>
          </ComposerTools>
        </Composer>
      </Chat>

      <StatusBar>//winline.ru/#</StatusBar>
    </Page>
  );
}
